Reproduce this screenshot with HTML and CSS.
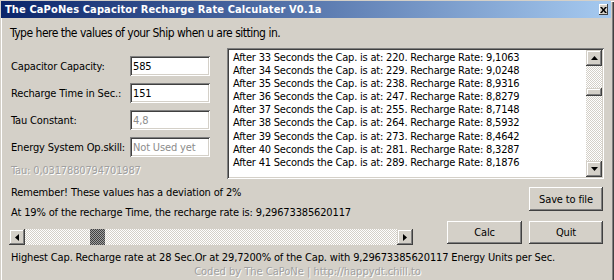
FILE: index.html
```html
<!DOCTYPE html>
<html lang="en">

<head>
    <meta charset="UTF-8">
    <title>The CaPoNes Capacitor Recharge Rate Calculater V0.1a</title>
    <link rel="stylesheet" href="styles.css">
</head>

<body>
    <div class="window">
        <div class="titlebar">
            <span class="title">The CaPoNes Capacitor Recharge Rate Calculater V0.1a</span>
            <span class="close">
                <svg width="7" height="6" viewBox="0 0 7 6"><path d="M0 0h2l1.5 2 1.5-2h2l-2.5 3 2.5 3h-2l-1.5-2-1.5 2h-2l2.5-3z" fill="#000"/></svg>
            </span>
        </div>

        <div class="client">
            <p class="intro">Type here the values of your Ship when u are sitting in.</p>

            <div class="top">
                <div class="fields">
                    <div class="field"><label>Capacitor Capacity:</label><input class="edit" value="585"></div>
                    <div class="field"><label>Recharge Time in Sec.:</label><input class="edit" value="151"></div>
                    <div class="field"><label>Tau Constant:</label><input class="edit" value="4,8" disabled></div>
                    <div class="field"><label>Energy System Op.skill:</label><input class="edit" value="Not Used yet" disabled></div>
                    <div class="disabled-text tau">Tau: 0,0317880794701987</div>
                </div>

                <div class="listbox">
                    <ul class="rows">
                        <li>After 33 Seconds the Cap. is at: 220. Recharge Rate: 9,1063</li>
                        <li>After 34 Seconds the Cap. is at: 229. Recharge Rate: 9,0248</li>
                        <li>After 35 Seconds the Cap. is at: 238. Recharge Rate: 8,9316</li>
                        <li>After 36 Seconds the Cap. is at: 247. Recharge Rate: 8,8279</li>
                        <li>After 37 Seconds the Cap. is at: 255. Recharge Rate: 8,7148</li>
                        <li>After 38 Seconds the Cap. is at: 264. Recharge Rate: 8,5932</li>
                        <li>After 39 Seconds the Cap. is at: 273. Recharge Rate: 8,4642</li>
                        <li>After 40 Seconds the Cap. is at: 281. Recharge Rate: 8,3287</li>
                        <li>After 41 Seconds the Cap. is at: 289. Recharge Rate: 8,1876</li>
                    </ul>
                    <div class="vscroll">
                        <span class="arrow"><svg width="7" height="4" viewBox="0 0 7 4"><path d="M3.5 0L7 4H0z" fill="#000"/></svg></span>
                        <div class="track">
                            <span class="vthumb"></span>
                        </div>
                        <span class="arrow"><svg width="7" height="4" viewBox="0 0 7 4"><path d="M0 0h7L3.5 4z" fill="#000"/></svg></span>
                    </div>
                </div>
            </div>

            <div class="status">
                <div class="notes">
                    <p>Remember! These values has a deviation of 2%</p>
                    <p class="rate">At 19% of the recharge Time, the recharge rate is: 9,29673385620117</p>
                </div>
                <button class="btn save">Save to file</button>
            </div>

            <div class="controls">
                <div class="hscroll">
                    <span class="arrow"><svg width="4" height="7" viewBox="0 0 4 7"><path d="M0 3.5L4 0v7z" fill="#000"/></svg></span>
                    <div class="htrack">
                        <span class="hthumb"></span>
                    </div>
                    <span class="arrow"><svg width="4" height="7" viewBox="0 0 4 7"><path d="M4 3.5L0 0v7z" fill="#000"/></svg></span>
                </div>
                <button class="btn calc">Calc</button>
                <button class="btn quit">Quit</button>
            </div>

            <p class="summary">Highest Cap. Recharge rate at 28 Sec.Or at 29,7200% of the Cap. with 9,29673385620117 Energy Units per Sec.</p>
            <p class="disabled-text credit">Coded by The CaPoNe | http://happydt.chill.to</p>
        </div>
    </div>
</body>

</html>
```

FILE: styles.css
```css
body {
    margin: 0;
    background: #d4d0c8;
    font-family: "DejaVu Sans Condensed", "DejaVu Sans", sans-serif;
    font-size: 11px;
    letter-spacing: -0.15px;
    color: #000;
}

p {
    margin: 0;
}

.window {
    width: 614px;
    height: 280px;
    box-sizing: border-box;
    overflow: hidden;
    background: #d4d0c8;
    box-shadow: inset 1px 1px #d4d0c8, inset 2px 2px #fff, inset -1px 0 #404040, inset -2px 0 #808080;
}

.titlebar {
    display: flex;
    align-items: center;
    height: 17px;
    margin: 1px 3px 0 1px;
    padding: 0 3px 0 4px;
    background: linear-gradient(to right, #0a246a, #a6caf0);
}

.title {
    color: #fff;
    font-weight: bold;
    font-size: 11px;
    letter-spacing: 0.12px;
    white-space: nowrap;
}

.close {
    display: flex;
    align-items: center;
    justify-content: center;
    margin-left: auto;
    width: 9px;
    height: 11px;
    background: #d4d0c8;
    box-shadow: inset -1px -1px #404040, inset 1px 1px #fff;
}

.client {
    padding: 0 10px 0 11px;
}

.intro {
    margin: 7px 0 0 -1px;
    font-size: 12px;
    letter-spacing: -0.5px;
    line-height: 16px;
}

.top {
    display: flex;
    margin-top: 7px;
}

.fields {
    padding-top: 8px;
}

.field {
    display: flex;
    align-items: center;
    height: 20px;
    margin-bottom: 7px;
}

.field label {
    width: 119px;
}

.edit {
    width: 80px;
    height: 20px;
    box-sizing: border-box;
    padding: 0 3px;
    border: none;
    background: #fff;
    font: inherit;
    letter-spacing: inherit;
    color: #000;
    box-shadow: inset 1px 1px #808080, inset -1px -1px #fff, inset 2px 2px #404040, inset -2px -2px #d4d0c8;
}

.edit:disabled {
    color: #8c8c8c;
}

.disabled-text {
    color: #a0a0a0;
    text-shadow: 1px 1px #fff;
}

.tau {
    margin-top: 1px;
    line-height: 14px;
}

.listbox {
    display: flex;
    margin-left: auto;
    width: 377px;
    height: 131px;
    box-sizing: border-box;
    padding: 2px;
    background: #fff;
    box-shadow: inset 1px 1px #808080, inset -1px -1px #fff, inset 2px 2px #404040, inset -2px -2px #d4d0c8;
}

.rows {
    flex: 1;
    margin: 0;
    padding: 1px 0 0 4px;
    list-style: none;
    overflow: hidden;
    line-height: 13.1px;
    letter-spacing: -0.2px;
    white-space: nowrap;
}

.vscroll {
    display: flex;
    flex-direction: column;
    width: 16px;
}

.arrow {
    display: flex;
    align-items: center;
    justify-content: center;
    width: 16px;
    height: 16px;
    flex: none;
    background: #d4d0c8;
    box-shadow: inset -1px -1px #404040, inset 1px 1px #d4d0c8, inset -2px -2px #808080, inset 2px 2px #fff;
}

.track,
.htrack {
    flex: 1;
    background: repeating-conic-gradient(#fff 0 25%, #d4d0c8 0 50%) 0 0 / 2px 2px;
}

.vthumb {
    display: block;
    margin-top: 22px;
    height: 8px;
    background: #d4d0c8;
    box-shadow: inset -1px -1px #404040, inset 1px 1px #d4d0c8, inset -2px -2px #808080, inset 2px 2px #fff;
}

.status {
    display: flex;
    align-items: flex-start;
}

.notes {
    padding-top: 7px;
    line-height: 14px;
}

.rate {
    margin-top: 6px;
}

.btn {
    height: 23px;
    padding: 0;
    border: none;
    background: #d4d0c8;
    font: inherit;
    letter-spacing: inherit;
    color: #000;
    box-shadow: inset -1px -1px #404040, inset 1px 1px #fff, inset -2px -2px #808080, inset 2px 2px #d4d0c8;
}

.save {
    margin: 8px 1px 0 auto;
    width: 74px;
    height: 24px;
}

.controls {
    display: flex;
    align-items: flex-start;
    margin-top: 1px;
}

.hscroll {
    display: flex;
    margin: 8px 0 0 -2px;
    width: 404px;
    height: 16px;
}

.hthumb {
    display: block;
    margin-left: 65px;
    width: 15px;
    height: 16px;
    background: repeating-conic-gradient(#404040 0 25%, #a0a0a0 0 50%) 0 0 / 2px 2px;
}

.calc {
    margin-left: auto;
    width: 75px;
}

.quit {
    margin: 0 1px 0 7px;
    width: 74px;
}

.summary {
    margin-top: 6px;
    line-height: 14px;
    white-space: nowrap;
}

.credit {
    line-height: 14px;
    letter-spacing: 0;
    text-align: center;
}
```
